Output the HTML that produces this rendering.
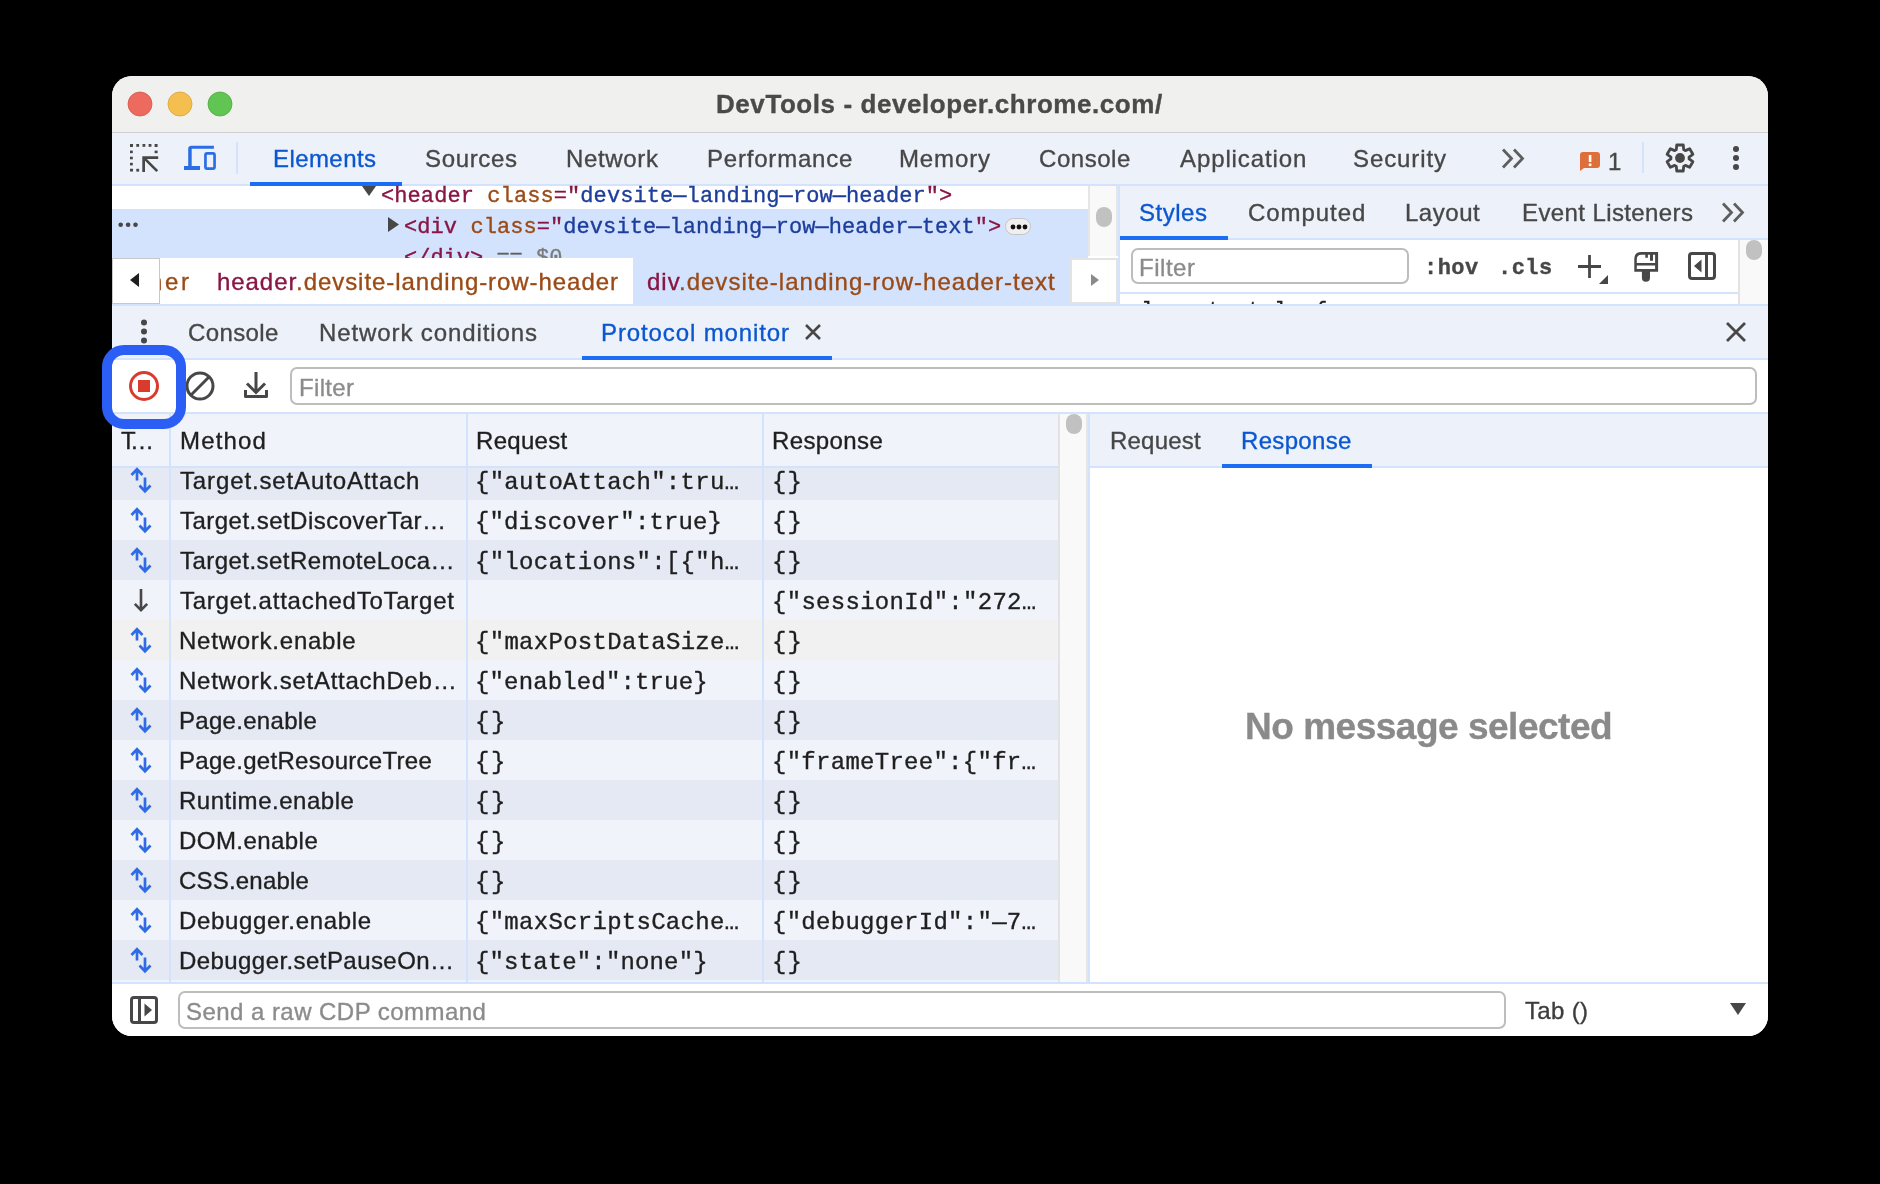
<!DOCTYPE html>
<html><head><meta charset="utf-8"><style>
html,body{margin:0;padding:0;background:#000;width:1880px;height:1184px;overflow:hidden}
#win div{}
.t{will-change:transform;-webkit-text-stroke:0.35px currentColor}
#win{position:absolute;left:0;top:0;width:1880px;height:1184px;clip-path:inset(76px 112px 148px 112px round 20px);background:#fff}
</style></head><body>
<div id="win">
<div style="position:absolute;left:112px;top:76px;width:1656px;height:56px;background:#f0f0ee;"></div>
<div style="position:absolute;left:112px;top:132px;width:1656px;height:1px;background:#cfcfcf;"></div>
<svg style="position:absolute;left:127px;top:91px" width="26" height="26" viewBox="0 0 26 26"><circle cx="13" cy="13" r="12" fill="#ed6a5e" stroke="#d5574b" stroke-width="0.8"/></svg>
<svg style="position:absolute;left:167px;top:91px" width="26" height="26" viewBox="0 0 26 26"><circle cx="13" cy="13" r="12" fill="#f5bf4f" stroke="#d9a23a" stroke-width="0.8"/></svg>
<svg style="position:absolute;left:207px;top:91px" width="26" height="26" viewBox="0 0 26 26"><circle cx="13" cy="13" r="12" fill="#61c554" stroke="#4fa83f" stroke-width="0.8"/></svg>
<div class="t" style="position:absolute;left:716.00px;top:89px;line-height:0;white-space:pre;font:700 26px 'Liberation Sans',sans-serif;letter-spacing:0.567px;color:#4a4a4a;">DevTools - developer.chrome.com/</div>
<div style="position:absolute;left:112px;top:133px;width:1656px;height:51px;background:#edf2fa;"></div>
<div style="position:absolute;left:112px;top:184px;width:1656px;height:2px;background:#d3e3fd;"></div>
<div style="position:absolute;left:250px;top:182px;width:152px;height:4px;background:#1b6ef3;"></div>
<svg style="position:absolute;left:128px;top:142px" width="32" height="32" viewBox="0 0 32 32"><g fill="#474747"><path d="M2 2 H5 V4.8 H4.8 V5 H2 Z"/><rect x="8.3" y="2" width="2.8" height="2.8"/><rect x="14.5" y="2" width="2.8" height="2.8"/><rect x="20.6" y="2" width="2.8" height="2.8"/><path d="M26.6 2 H29.6 V5 H26.6 Z"/><rect x="2" y="8.6" width="2.8" height="2.6"/><rect x="2" y="14.7" width="2.8" height="2.6"/><rect x="2" y="20.8" width="2.8" height="2.6"/><path d="M2 26.8 H5 V29.6 H2 Z"/><rect x="8.3" y="26.8" width="2.8" height="2.8"/><rect x="26.6" y="8.6" width="3" height="2.6"/></g><path d="M14.3 14.2 H30.2 V16.9 H18.9 L30.2 28.2 L28.3 30.1 L17 18.8 V29.9 H14.3 Z" fill="#474747"/></svg>
<svg style="position:absolute;left:182px;top:144px" width="36" height="30" viewBox="0 0 36 30"><path d="M6.2 22 V5 Q6.2 1.7 9.5 1.7 H31.9 V4.8 H9.7 V22 H18 V26 H2 V22 Z" fill="#2b6de6"/><rect x="23.45" y="9.45" width="9.1" height="15.2" rx="1.6" fill="none" stroke="#2b6de6" stroke-width="2.7"/></svg>
<div style="position:absolute;left:236px;top:142px;width:2px;height:32px;background:#d3e3fd;"></div>
<div class="t" style="position:absolute;left:273.00px;top:145px;line-height:0;white-space:pre;font:400 24px 'Liberation Sans',sans-serif;letter-spacing:0.422px;color:#0b57d0;">Elements</div>
<div class="t" style="position:absolute;left:425.00px;top:145px;line-height:0;white-space:pre;font:400 24px 'Liberation Sans',sans-serif;letter-spacing:0.660px;color:#474747;">Sources</div>
<div class="t" style="position:absolute;left:566.00px;top:145px;line-height:0;white-space:pre;font:400 24px 'Liberation Sans',sans-serif;letter-spacing:0.663px;color:#474747;">Network</div>
<div class="t" style="position:absolute;left:707.00px;top:145px;line-height:0;white-space:pre;font:400 24px 'Liberation Sans',sans-serif;letter-spacing:0.796px;color:#474747;">Performance</div>
<div class="t" style="position:absolute;left:899.00px;top:145px;line-height:0;white-space:pre;font:400 24px 'Liberation Sans',sans-serif;letter-spacing:0.866px;color:#474747;">Memory</div>
<div class="t" style="position:absolute;left:1039.00px;top:145px;line-height:0;white-space:pre;font:400 24px 'Liberation Sans',sans-serif;letter-spacing:0.549px;color:#474747;">Console</div>
<div class="t" style="position:absolute;left:1180.00px;top:145px;line-height:0;white-space:pre;font:400 24px 'Liberation Sans',sans-serif;letter-spacing:0.894px;color:#474747;">Application</div>
<div class="t" style="position:absolute;left:1353.00px;top:145px;line-height:0;white-space:pre;font:400 24px 'Liberation Sans',sans-serif;letter-spacing:0.901px;color:#474747;">Security</div>
<svg style="position:absolute;left:1499px;top:146px" width="32" height="24" viewBox="0 0 32 24"><path d="M4 3.5 L12.5 12.5 L4 21.5 M15 3.5 L23.5 12.5 L15 21.5" fill="none" stroke="#5e5e5e" stroke-width="2.8"/></svg>
<svg style="position:absolute;left:1577px;top:150px" width="26" height="22" viewBox="0 0 26 22"><path d="M4 2 H20 Q23 2 23 5 V15 Q23 18 20 18 H7 L3 21 V5 Q3 2 6 2 Z" fill="#dd6f3b"/><rect x="11.8" y="5" width="2.6" height="7" fill="#fff"/><rect x="11.8" y="13.5" width="2.6" height="2.6" fill="#fff"/></svg>
<div class="t" style="position:absolute;left:1608.00px;top:148px;line-height:0;white-space:pre;font:400 24px 'Liberation Sans',sans-serif;letter-spacing:0.600px;color:#474747;">1</div>
<div style="position:absolute;left:1642px;top:142px;width:2px;height:31px;background:#d3e3fd;"></div>
<svg style="position:absolute;left:1662px;top:140px" width="36" height="36" viewBox="0 0 36 36"><path d="M14.30 9.69 L14.76 5.00 L21.24 5.00 L21.70 9.69 A9.1 9.1 0 0 1 23.35 10.64 L23.35 10.64 L27.64 8.69 L30.88 14.31 L27.05 17.05 A9.1 9.1 0 0 1 27.05 18.95 L27.05 18.95 L30.88 21.69 L27.64 27.31 L23.35 25.36 A9.1 9.1 0 0 1 21.70 26.31 L21.70 26.31 L21.24 31.00 L14.76 31.00 L14.30 26.31 A9.1 9.1 0 0 1 12.65 25.36 L12.65 25.36 L8.36 27.31 L5.12 21.69 L8.95 18.95 A9.1 9.1 0 0 1 8.95 17.05 L8.95 17.05 L5.12 14.31 L8.36 8.69 L12.65 10.64 A9.1 9.1 0 0 1 14.30 9.69 Z" fill="none" stroke="#474747" stroke-width="2.8" stroke-linejoin="round"/><circle cx="18" cy="18" r="4.9" fill="#474747"/></svg>
<svg style="position:absolute;left:1728px;top:144px" width="16" height="28" viewBox="0 0 16 28"><circle cx="8" cy="5" r="3" fill="#474747"/><circle cx="8" cy="14" r="3" fill="#474747"/><circle cx="8" cy="23" r="3" fill="#474747"/></svg>
<div style="position:absolute;left:112px;top:186px;width:976px;height:23px;background:#ffffff;"></div>
<div style="position:absolute;left:112px;top:209px;width:976px;height:49px;background:#d3e3fd;"></div>
<svg style="position:absolute;left:360px;top:184px" width="20" height="14" viewBox="0 0 20 14"><path d="M2 2 H16 L9 12 Z" fill="#474747"/></svg>
<svg style="position:absolute;left:386px;top:215px" width="16" height="19" viewBox="0 0 16 19"><path d="M2 2 V17 L13 9.5 Z" fill="#474747"/></svg>
<svg style="position:absolute;left:116px;top:218px" width="26" height="14" viewBox="0 0 26 14"><circle cx="4.7" cy="6.7" r="2.3" fill="#474747"/><circle cx="12.1" cy="6.7" r="2.3" fill="#474747"/><circle cx="19.5" cy="6.7" r="2.3" fill="#474747"/></svg>
<div class="t" style="position:absolute;left:381.00px;top:184px;line-height:0;white-space:pre;font:400 22px 'Liberation Mono',monospace;letter-spacing:0.084px;color:#000;"><span style="color:#881544">&lt;header</span><span style="color:#881544"> </span><span style="color:#9b4a15">class</span><span style="color:#881544">=&quot;</span><span style="color:#1d3d9b">devsite—landing—row—header</span><span style="color:#881544">&quot;&gt;</span></div>
<div class="t" style="position:absolute;left:404.00px;top:215px;line-height:0;white-space:pre;font:400 22px 'Liberation Mono',monospace;letter-spacing:0.071px;color:#000;"><span style="color:#881544">&lt;div</span><span style="color:#881544"> </span><span style="color:#9b4a15">class</span><span style="color:#881544">=&quot;</span><span style="color:#1d3d9b">devsite—landing—row—header—text</span><span style="color:#881544">&quot;&gt;</span></div>
<div class="t" style="position:absolute;left:404.00px;top:246px;line-height:0;white-space:pre;font:400 22px 'Liberation Mono',monospace;letter-spacing:0.000px;color:#000;"><span style="color:#881544">&lt;/div&gt;</span><span style="color:#5f5f5f"> == </span><span style="color:#7a7a7a">$0</span></div>
<div style="position:absolute;left:1005px;top:218px;width:24px;height:15px;border:1.5px solid #c4c4c4;border-radius:9px;background:#efefef"></div>
<svg style="position:absolute;left:1008px;top:221px" width="22" height="12" viewBox="0 0 22 12"><circle cx="5" cy="6" r="2.4" fill="#111"/><circle cx="11" cy="6" r="2.4" fill="#111"/><circle cx="17" cy="6" r="2.4" fill="#111"/></svg>
<div style="position:absolute;left:1088px;top:186px;width:30px;height:70px;background:#f9f9f9;border-left:2px solid #e6e6e6;border-right:2px solid #e6e6e6;box-sizing:border-box"></div>
<div style="position:absolute;left:1096px;top:207px;width:16px;height:20px;background:#c1c1c1;border-radius:8px"></div>
<div style="position:absolute;left:112px;top:258px;width:1006px;height:46px;background:#ffffff;"></div>
<div style="position:absolute;left:633px;top:258px;width:438px;height:46px;background:#d3e3fd;"></div>
<div class="t" style="position:absolute;left:149.00px;top:268px;line-height:0;white-space:pre;font:400 24px 'Liberation Sans',sans-serif;letter-spacing:2.652px;color:#9b4a15;">ner</div>
<div class="t" style="position:absolute;left:217.00px;top:268px;line-height:0;white-space:pre;font:400 24px 'Liberation Sans',sans-serif;letter-spacing:0.940px;color:#881544;"><span style="color:#881544">header</span><span style="color:#9b4a15">.devsite-landing-row-header</span></div>
<div class="t" style="position:absolute;left:647.00px;top:268px;line-height:0;white-space:pre;font:400 24px 'Liberation Sans',sans-serif;letter-spacing:1.018px;color:#881544;"><span style="color:#881544">div</span><span style="color:#9b4a15">.devsite-landing-row-header-text</span></div>
<div style="position:absolute;left:112px;top:258px;width:48px;height:46px;box-sizing:border-box;border:1.5px solid #c7c7c7;background:#fff"></div>
<svg style="position:absolute;left:128px;top:272px" width="14" height="16" viewBox="0 0 14 16"><path d="M11 1 V15 L2 8 Z" fill="#1f1f1f"/></svg>
<div style="position:absolute;left:1070px;top:258px;width:48px;height:46px;box-sizing:border-box;border:2px solid #e3e3e3;background:#fff"></div>
<svg style="position:absolute;left:1088px;top:272px" width="14" height="16" viewBox="0 0 14 16"><path d="M3 2 V14 L11 8 Z" fill="#8a8a8a"/></svg>
<div style="position:absolute;left:1118px;top:186px;width:2px;height:118px;background:#d3e3fd;"></div>
<div style="position:absolute;left:1120px;top:186px;width:648px;height:52px;background:#edf2fa;"></div>
<div style="position:absolute;left:1120px;top:238px;width:648px;height:2px;background:#d3e3fd;"></div>
<div style="position:absolute;left:1120px;top:236px;width:108px;height:4px;background:#1b6ef3;"></div>
<div class="t" style="position:absolute;left:1139.00px;top:199px;line-height:0;white-space:pre;font:400 24px 'Liberation Sans',sans-serif;letter-spacing:0.529px;color:#0b57d0;">Styles</div>
<div class="t" style="position:absolute;left:1248.00px;top:199px;line-height:0;white-space:pre;font:400 24px 'Liberation Sans',sans-serif;letter-spacing:0.945px;color:#474747;">Computed</div>
<div class="t" style="position:absolute;left:1405.00px;top:199px;line-height:0;white-space:pre;font:400 24px 'Liberation Sans',sans-serif;letter-spacing:0.522px;color:#474747;">Layout</div>
<div class="t" style="position:absolute;left:1522.00px;top:199px;line-height:0;white-space:pre;font:400 24px 'Liberation Sans',sans-serif;letter-spacing:0.398px;color:#474747;">Event Listeners</div>
<svg style="position:absolute;left:1719px;top:200px" width="32" height="24" viewBox="0 0 32 24"><path d="M4 3.5 L12.5 12.5 L4 21.5 M15 3.5 L23.5 12.5 L15 21.5" fill="none" stroke="#5e5e5e" stroke-width="2.8"/></svg>
<div style="position:absolute;left:1120px;top:240px;width:618px;height:52px;background:#ffffff;"></div>
<div style="position:absolute;left:1120px;top:292px;width:618px;height:2px;background:#d3e3fd;"></div>
<div style="position:absolute;left:1120px;top:294px;width:618px;height:10px;background:#ffffff;"></div>
<div class="t" style="position:absolute;left:1128.00px;top:299px;line-height:0;white-space:pre;font:400 22px 'Liberation Mono',monospace;letter-spacing:0.100px;color:#1f1f1f;">element.style {</div>
<div style="position:absolute;left:1131px;top:248px;width:278px;height:36px;box-sizing:border-box;border:2px solid #bdbdbd;border-radius:7px;background:#fff"></div>
<div class="t" style="position:absolute;left:1139.00px;top:254px;line-height:0;white-space:pre;font:400 24px 'Liberation Sans',sans-serif;letter-spacing:0.532px;color:#8b8b8b;">Filter</div>
<div class="t" style="position:absolute;left:1424.00px;top:256px;line-height:0;white-space:pre;font:700 22px 'Liberation Mono',monospace;letter-spacing:0.465px;color:#474747;">:hov</div>
<div class="t" style="position:absolute;left:1498.00px;top:256px;line-height:0;white-space:pre;font:700 22px 'Liberation Mono',monospace;letter-spacing:0.465px;color:#474747;">.cls</div>
<svg style="position:absolute;left:1576px;top:252px" width="34" height="34" viewBox="0 0 34 34"><path d="M13.5 3 V26 M2 14.5 H25" stroke="#474747" stroke-width="2.8" fill="none"/><path d="M32 23 V32 H23 Z" fill="#474747"/></svg>
<svg style="position:absolute;left:1632px;top:250px" width="28" height="34" viewBox="0 0 28 34"><path fill="#474747" fill-rule="evenodd" d="M2.3 21.8 V9 Q2.3 2 9.3 2 H26.1 V21.8 Z M4.8 13 V9.3 Q4.8 4.8 9.3 4.8 H13.3 V7.8 H15.9 V4.8 H18 V10.7 H21 V4.8 H23.1 V13 Z M4.8 15.6 H23.1 V19 H4.8 Z"/><path fill="#474747" d="M9.9 21 H18 V27.8 A4.05 4.05 0 0 1 9.9 27.8 Z"/></svg>
<svg style="position:absolute;left:1686px;top:250px" width="32" height="32" viewBox="0 0 32 32"><rect x="3.5" y="3.5" width="25" height="25" rx="2.5" fill="none" stroke="#474747" stroke-width="3"/><rect x="19" y="3.5" width="3" height="25" fill="#474747"/><path d="M15.5 9.5 V22.5 L8 16 Z" fill="#474747"/></svg>
<div style="position:absolute;left:1738px;top:240px;width:30px;height:64px;background:#f9f9f9;border-left:2px solid #e3e3e3;box-sizing:border-box"></div>
<div style="position:absolute;left:1746px;top:240px;width:16px;height:20px;background:#c1c1c1;border-radius:8px"></div>
<div style="position:absolute;left:112px;top:304px;width:1656px;height:2px;background:#d3e3fd;"></div>
<div style="position:absolute;left:112px;top:306px;width:1656px;height:52px;background:#edf2fa;"></div>
<div style="position:absolute;left:112px;top:358px;width:1656px;height:2px;background:#d3e3fd;"></div>
<svg style="position:absolute;left:136px;top:316px" width="16" height="30" viewBox="0 0 16 30"><circle cx="8" cy="6.5" r="3" fill="#474747"/><circle cx="8" cy="15.5" r="3" fill="#474747"/><circle cx="8" cy="24.5" r="3" fill="#474747"/></svg>
<div class="t" style="position:absolute;left:188.00px;top:319px;line-height:0;white-space:pre;font:400 24px 'Liberation Sans',sans-serif;letter-spacing:0.382px;color:#474747;">Console</div>
<div class="t" style="position:absolute;left:319.00px;top:319px;line-height:0;white-space:pre;font:400 24px 'Liberation Sans',sans-serif;letter-spacing:0.897px;color:#474747;">Network conditions</div>
<div class="t" style="position:absolute;left:601.00px;top:319px;line-height:0;white-space:pre;font:400 24px 'Liberation Sans',sans-serif;letter-spacing:0.884px;color:#0b57d0;">Protocol monitor</div>
<svg style="position:absolute;left:803px;top:322px" width="20" height="20" viewBox="0 0 20 20"><path d="M3 3 L17 17 M17 3 L3 17" stroke="#474747" stroke-width="2.6"/></svg>
<div style="position:absolute;left:582px;top:356px;width:250px;height:4px;background:#1b6ef3;"></div>
<svg style="position:absolute;left:1724px;top:320px" width="24" height="24" viewBox="0 0 24 24"><path d="M3 3 L21 21 M21 3 L3 21" stroke="#474747" stroke-width="2.8"/></svg>
<div style="position:absolute;left:112px;top:360px;width:1656px;height:52px;background:#ffffff;"></div>
<div style="position:absolute;left:112px;top:412px;width:1656px;height:2px;background:#d3e3fd;"></div>
<svg style="position:absolute;left:126px;top:368px" width="36" height="36" viewBox="0 0 36 36"><circle cx="18" cy="18" r="13.5" fill="none" stroke="#d93b2f" stroke-width="3"/><rect x="12" y="12" width="12" height="12" fill="#d93b2f"/></svg>
<svg style="position:absolute;left:183px;top:368px" width="34" height="36" viewBox="0 0 34 36"><circle cx="17" cy="18" r="13" fill="none" stroke="#474747" stroke-width="3"/><path d="M26.2 8.8 L7.8 27.2" stroke="#474747" stroke-width="3"/></svg>
<svg style="position:absolute;left:240px;top:368px" width="32" height="34" viewBox="0 0 32 34"><path d="M16 4 V24 M7 15.5 L16 24.5 L25 15.5" fill="none" stroke="#474747" stroke-width="3"/><path d="M5.5 22 V28.5 H26.5 V22" fill="none" stroke="#474747" stroke-width="3" stroke-linejoin="round"/></svg>
<div style="position:absolute;left:290px;top:367px;width:1467px;height:38px;box-sizing:border-box;border:2px solid #bdbdbd;border-radius:7px;background:#fff"></div>
<div class="t" style="position:absolute;left:299.00px;top:374px;line-height:0;white-space:pre;font:400 24px 'Liberation Sans',sans-serif;letter-spacing:0.332px;color:#8b8b8b;">Filter</div>
<div style="position:absolute;left:112px;top:414px;width:946px;height:52px;background:#f0f3f9;"></div>
<div style="position:absolute;left:112px;top:466px;width:946px;height:2px;background:#d3e3fd;"></div>
<div style="position:absolute;left:112px;top:468px;width:946px;height:32px;background:#e4e9f4;"></div>
<div style="position:absolute;left:112px;top:500px;width:946px;height:40px;background:#f0f3f9;"></div>
<div style="position:absolute;left:112px;top:540px;width:946px;height:40px;background:#e4e9f4;"></div>
<div style="position:absolute;left:112px;top:580px;width:946px;height:40px;background:#f0f3f9;"></div>
<div style="position:absolute;left:112px;top:620px;width:946px;height:40px;background:#f1f1f1;"></div>
<div style="position:absolute;left:112px;top:660px;width:946px;height:40px;background:#f0f3f9;"></div>
<div style="position:absolute;left:112px;top:700px;width:946px;height:40px;background:#e4e9f4;"></div>
<div style="position:absolute;left:112px;top:740px;width:946px;height:40px;background:#f0f3f9;"></div>
<div style="position:absolute;left:112px;top:780px;width:946px;height:40px;background:#e4e9f4;"></div>
<div style="position:absolute;left:112px;top:820px;width:946px;height:40px;background:#f0f3f9;"></div>
<div style="position:absolute;left:112px;top:860px;width:946px;height:40px;background:#e4e9f4;"></div>
<div style="position:absolute;left:112px;top:900px;width:946px;height:40px;background:#f0f3f9;"></div>
<div style="position:absolute;left:112px;top:940px;width:946px;height:40px;background:#e4e9f4;"></div>
<svg style="position:absolute;left:128px;top:466px" width="26" height="28" viewBox="0 0 26 28"><path d="M9 14.5 V3.5 M3.5 9 L9 3.2 L14.5 9" fill="none" stroke="#2f6be6" stroke-width="2.7"/><path d="M17 11.5 V25 M11.5 19.5 L17 25.3 L22.5 19.5" fill="none" stroke="#2f6be6" stroke-width="2.7"/></svg>
<div class="t" style="position:absolute;left:180.00px;top:467px;line-height:0;white-space:pre;font:400 24px 'Liberation Sans',sans-serif;letter-spacing:0.871px;color:#1f1f1f;">Target.setAutoAttach</div>
<div class="t" style="position:absolute;left:475.00px;top:469px;line-height:0;white-space:pre;font:400 24px 'Liberation Mono',monospace;letter-spacing:0.280px;color:#1f1f1f;">{&quot;autoAttach&quot;:tru…</div>
<div class="t" style="position:absolute;left:771.50px;top:469px;line-height:0;white-space:pre;font:400 24px 'Liberation Mono',monospace;letter-spacing:1.098px;color:#1f1f1f;">{}</div>
<svg style="position:absolute;left:128px;top:506px" width="26" height="28" viewBox="0 0 26 28"><path d="M9 14.5 V3.5 M3.5 9 L9 3.2 L14.5 9" fill="none" stroke="#2f6be6" stroke-width="2.7"/><path d="M17 11.5 V25 M11.5 19.5 L17 25.3 L22.5 19.5" fill="none" stroke="#2f6be6" stroke-width="2.7"/></svg>
<div class="t" style="position:absolute;left:180.00px;top:507px;line-height:0;white-space:pre;font:400 24px 'Liberation Sans',sans-serif;letter-spacing:0.472px;color:#1f1f1f;">Target.setDiscoverTar…</div>
<div class="t" style="position:absolute;left:475.00px;top:509px;line-height:0;white-space:pre;font:400 24px 'Liberation Mono',monospace;letter-spacing:0.135px;color:#1f1f1f;">{&quot;discover&quot;:true}</div>
<div class="t" style="position:absolute;left:771.50px;top:509px;line-height:0;white-space:pre;font:400 24px 'Liberation Mono',monospace;letter-spacing:1.098px;color:#1f1f1f;">{}</div>
<svg style="position:absolute;left:128px;top:546px" width="26" height="28" viewBox="0 0 26 28"><path d="M9 14.5 V3.5 M3.5 9 L9 3.2 L14.5 9" fill="none" stroke="#2f6be6" stroke-width="2.7"/><path d="M17 11.5 V25 M11.5 19.5 L17 25.3 L22.5 19.5" fill="none" stroke="#2f6be6" stroke-width="2.7"/></svg>
<div class="t" style="position:absolute;left:180.00px;top:547px;line-height:0;white-space:pre;font:400 24px 'Liberation Sans',sans-serif;letter-spacing:0.457px;color:#1f1f1f;">Target.setRemoteLoca…</div>
<div class="t" style="position:absolute;left:475.00px;top:549px;line-height:0;white-space:pre;font:400 24px 'Liberation Mono',monospace;letter-spacing:0.280px;color:#1f1f1f;">{&quot;locations&quot;:[{&quot;h…</div>
<div class="t" style="position:absolute;left:771.50px;top:549px;line-height:0;white-space:pre;font:400 24px 'Liberation Mono',monospace;letter-spacing:1.098px;color:#1f1f1f;">{}</div>
<svg style="position:absolute;left:130px;top:586px" width="22" height="28" viewBox="0 0 22 28"><path d="M11 3 V24 M4.8 17.8 L11 24.2 L17.2 17.8" fill="none" stroke="#474747" stroke-width="2.6"/></svg>
<div class="t" style="position:absolute;left:180.00px;top:587px;line-height:0;white-space:pre;font:400 24px 'Liberation Sans',sans-serif;letter-spacing:0.749px;color:#1f1f1f;">Target.attachedToTarget</div>
<div class="t" style="position:absolute;left:771.50px;top:589px;line-height:0;white-space:pre;font:400 24px 'Liberation Mono',monospace;letter-spacing:0.292px;color:#1f1f1f;">{&quot;sessionId&quot;:&quot;272…</div>
<svg style="position:absolute;left:128px;top:626px" width="26" height="28" viewBox="0 0 26 28"><path d="M9 14.5 V3.5 M3.5 9 L9 3.2 L14.5 9" fill="none" stroke="#2f6be6" stroke-width="2.7"/><path d="M17 11.5 V25 M11.5 19.5 L17 25.3 L22.5 19.5" fill="none" stroke="#2f6be6" stroke-width="2.7"/></svg>
<div class="t" style="position:absolute;left:179.00px;top:627px;line-height:0;white-space:pre;font:400 24px 'Liberation Sans',sans-serif;letter-spacing:0.761px;color:#1f1f1f;">Network.enable</div>
<div class="t" style="position:absolute;left:475.00px;top:629px;line-height:0;white-space:pre;font:400 24px 'Liberation Mono',monospace;letter-spacing:0.286px;color:#1f1f1f;">{&quot;maxPostDataSize…</div>
<div class="t" style="position:absolute;left:771.50px;top:629px;line-height:0;white-space:pre;font:400 24px 'Liberation Mono',monospace;letter-spacing:1.098px;color:#1f1f1f;">{}</div>
<svg style="position:absolute;left:128px;top:666px" width="26" height="28" viewBox="0 0 26 28"><path d="M9 14.5 V3.5 M3.5 9 L9 3.2 L14.5 9" fill="none" stroke="#2f6be6" stroke-width="2.7"/><path d="M17 11.5 V25 M11.5 19.5 L17 25.3 L22.5 19.5" fill="none" stroke="#2f6be6" stroke-width="2.7"/></svg>
<div class="t" style="position:absolute;left:179.00px;top:667px;line-height:0;white-space:pre;font:400 24px 'Liberation Sans',sans-serif;letter-spacing:0.747px;color:#1f1f1f;">Network.setAttachDeb…</div>
<div class="t" style="position:absolute;left:475.00px;top:669px;line-height:0;white-space:pre;font:400 24px 'Liberation Mono',monospace;letter-spacing:0.144px;color:#1f1f1f;">{&quot;enabled&quot;:true}</div>
<div class="t" style="position:absolute;left:771.50px;top:669px;line-height:0;white-space:pre;font:400 24px 'Liberation Mono',monospace;letter-spacing:1.098px;color:#1f1f1f;">{}</div>
<svg style="position:absolute;left:128px;top:706px" width="26" height="28" viewBox="0 0 26 28"><path d="M9 14.5 V3.5 M3.5 9 L9 3.2 L14.5 9" fill="none" stroke="#2f6be6" stroke-width="2.7"/><path d="M17 11.5 V25 M11.5 19.5 L17 25.3 L22.5 19.5" fill="none" stroke="#2f6be6" stroke-width="2.7"/></svg>
<div class="t" style="position:absolute;left:179.00px;top:707px;line-height:0;white-space:pre;font:400 24px 'Liberation Sans',sans-serif;letter-spacing:0.296px;color:#1f1f1f;">Page.enable</div>
<div class="t" style="position:absolute;left:475.00px;top:709px;line-height:0;white-space:pre;font:400 24px 'Liberation Mono',monospace;letter-spacing:1.598px;color:#1f1f1f;">{}</div>
<div class="t" style="position:absolute;left:771.50px;top:709px;line-height:0;white-space:pre;font:400 24px 'Liberation Mono',monospace;letter-spacing:1.098px;color:#1f1f1f;">{}</div>
<svg style="position:absolute;left:128px;top:746px" width="26" height="28" viewBox="0 0 26 28"><path d="M9 14.5 V3.5 M3.5 9 L9 3.2 L14.5 9" fill="none" stroke="#2f6be6" stroke-width="2.7"/><path d="M17 11.5 V25 M11.5 19.5 L17 25.3 L22.5 19.5" fill="none" stroke="#2f6be6" stroke-width="2.7"/></svg>
<div class="t" style="position:absolute;left:179.00px;top:747px;line-height:0;white-space:pre;font:400 24px 'Liberation Sans',sans-serif;letter-spacing:0.294px;color:#1f1f1f;">Page.getResourceTree</div>
<div class="t" style="position:absolute;left:475.00px;top:749px;line-height:0;white-space:pre;font:400 24px 'Liberation Mono',monospace;letter-spacing:1.598px;color:#1f1f1f;">{}</div>
<div class="t" style="position:absolute;left:771.50px;top:749px;line-height:0;white-space:pre;font:400 24px 'Liberation Mono',monospace;letter-spacing:0.274px;color:#1f1f1f;">{&quot;frameTree&quot;:{&quot;fr…</div>
<svg style="position:absolute;left:128px;top:786px" width="26" height="28" viewBox="0 0 26 28"><path d="M9 14.5 V3.5 M3.5 9 L9 3.2 L14.5 9" fill="none" stroke="#2f6be6" stroke-width="2.7"/><path d="M17 11.5 V25 M11.5 19.5 L17 25.3 L22.5 19.5" fill="none" stroke="#2f6be6" stroke-width="2.7"/></svg>
<div class="t" style="position:absolute;left:179.00px;top:787px;line-height:0;white-space:pre;font:400 24px 'Liberation Sans',sans-serif;letter-spacing:0.519px;color:#1f1f1f;">Runtime.enable</div>
<div class="t" style="position:absolute;left:475.00px;top:789px;line-height:0;white-space:pre;font:400 24px 'Liberation Mono',monospace;letter-spacing:1.598px;color:#1f1f1f;">{}</div>
<div class="t" style="position:absolute;left:771.50px;top:789px;line-height:0;white-space:pre;font:400 24px 'Liberation Mono',monospace;letter-spacing:1.098px;color:#1f1f1f;">{}</div>
<svg style="position:absolute;left:128px;top:826px" width="26" height="28" viewBox="0 0 26 28"><path d="M9 14.5 V3.5 M3.5 9 L9 3.2 L14.5 9" fill="none" stroke="#2f6be6" stroke-width="2.7"/><path d="M17 11.5 V25 M11.5 19.5 L17 25.3 L22.5 19.5" fill="none" stroke="#2f6be6" stroke-width="2.7"/></svg>
<div class="t" style="position:absolute;left:179.00px;top:827px;line-height:0;white-space:pre;font:400 24px 'Liberation Sans',sans-serif;letter-spacing:0.446px;color:#1f1f1f;">DOM.enable</div>
<div class="t" style="position:absolute;left:475.00px;top:829px;line-height:0;white-space:pre;font:400 24px 'Liberation Mono',monospace;letter-spacing:1.598px;color:#1f1f1f;">{}</div>
<div class="t" style="position:absolute;left:771.50px;top:829px;line-height:0;white-space:pre;font:400 24px 'Liberation Mono',monospace;letter-spacing:1.098px;color:#1f1f1f;">{}</div>
<svg style="position:absolute;left:128px;top:866px" width="26" height="28" viewBox="0 0 26 28"><path d="M9 14.5 V3.5 M3.5 9 L9 3.2 L14.5 9" fill="none" stroke="#2f6be6" stroke-width="2.7"/><path d="M17 11.5 V25 M11.5 19.5 L17 25.3 L22.5 19.5" fill="none" stroke="#2f6be6" stroke-width="2.7"/></svg>
<div class="t" style="position:absolute;left:179.00px;top:867px;line-height:0;white-space:pre;font:400 24px 'Liberation Sans',sans-serif;letter-spacing:0.196px;color:#1f1f1f;">CSS.enable</div>
<div class="t" style="position:absolute;left:475.00px;top:869px;line-height:0;white-space:pre;font:400 24px 'Liberation Mono',monospace;letter-spacing:1.598px;color:#1f1f1f;">{}</div>
<div class="t" style="position:absolute;left:771.50px;top:869px;line-height:0;white-space:pre;font:400 24px 'Liberation Mono',monospace;letter-spacing:1.098px;color:#1f1f1f;">{}</div>
<svg style="position:absolute;left:128px;top:906px" width="26" height="28" viewBox="0 0 26 28"><path d="M9 14.5 V3.5 M3.5 9 L9 3.2 L14.5 9" fill="none" stroke="#2f6be6" stroke-width="2.7"/><path d="M17 11.5 V25 M11.5 19.5 L17 25.3 L22.5 19.5" fill="none" stroke="#2f6be6" stroke-width="2.7"/></svg>
<div class="t" style="position:absolute;left:179.00px;top:907px;line-height:0;white-space:pre;font:400 24px 'Liberation Sans',sans-serif;letter-spacing:0.659px;color:#1f1f1f;">Debugger.enable</div>
<div class="t" style="position:absolute;left:475.00px;top:909px;line-height:0;white-space:pre;font:400 24px 'Liberation Mono',monospace;letter-spacing:0.280px;color:#1f1f1f;">{&quot;maxScriptsCache…</div>
<div class="t" style="position:absolute;left:771.50px;top:909px;line-height:0;white-space:pre;font:400 24px 'Liberation Mono',monospace;letter-spacing:0.274px;color:#1f1f1f;">{&quot;debuggerId&quot;:&quot;—7…</div>
<svg style="position:absolute;left:128px;top:946px" width="26" height="28" viewBox="0 0 26 28"><path d="M9 14.5 V3.5 M3.5 9 L9 3.2 L14.5 9" fill="none" stroke="#2f6be6" stroke-width="2.7"/><path d="M17 11.5 V25 M11.5 19.5 L17 25.3 L22.5 19.5" fill="none" stroke="#2f6be6" stroke-width="2.7"/></svg>
<div class="t" style="position:absolute;left:179.00px;top:947px;line-height:0;white-space:pre;font:400 24px 'Liberation Sans',sans-serif;letter-spacing:0.430px;color:#1f1f1f;">Debugger.setPauseOn…</div>
<div class="t" style="position:absolute;left:475.00px;top:949px;line-height:0;white-space:pre;font:400 24px 'Liberation Mono',monospace;letter-spacing:0.144px;color:#1f1f1f;">{&quot;state&quot;:&quot;none&quot;}</div>
<div class="t" style="position:absolute;left:771.50px;top:949px;line-height:0;white-space:pre;font:400 24px 'Liberation Mono',monospace;letter-spacing:1.098px;color:#1f1f1f;">{}</div>
<div style="position:absolute;left:112px;top:980px;width:946px;height:2px;background:#f0f3f9;"></div>
<div style="position:absolute;left:112px;top:982px;width:946px;height:2px;background:#d3e3fd;"></div>
<div class="t" style="position:absolute;left:121.00px;top:427px;line-height:0;white-space:pre;font:400 24px 'Liberation Sans',sans-serif;letter-spacing:-5.660px;color:#1f1f1f;">T…</div>
<div class="t" style="position:absolute;left:179.50px;top:427px;line-height:0;white-space:pre;font:400 24px 'Liberation Sans',sans-serif;letter-spacing:1.159px;color:#1f1f1f;">Method</div>
<div class="t" style="position:absolute;left:475.50px;top:427px;line-height:0;white-space:pre;font:400 24px 'Liberation Sans',sans-serif;letter-spacing:0.296px;color:#1f1f1f;">Request</div>
<div class="t" style="position:absolute;left:771.50px;top:427px;line-height:0;white-space:pre;font:400 24px 'Liberation Sans',sans-serif;letter-spacing:0.397px;color:#1f1f1f;">Response</div>
<div style="position:absolute;left:169px;top:414px;width:2px;height:568px;background:#d3e3fd;"></div>
<div style="position:absolute;left:466px;top:414px;width:2px;height:568px;background:#d3e3fd;"></div>
<div style="position:absolute;left:762px;top:414px;width:2px;height:568px;background:#d3e3fd;"></div>
<div style="position:absolute;left:1058px;top:414px;width:30px;height:570px;background:#f9f9f9;border-left:2px solid #e3e3e3;border-right:2px solid #e6e6e6;box-sizing:border-box"></div>
<div style="position:absolute;left:1066px;top:414px;width:16px;height:20px;background:#c1c1c1;border-radius:8px"></div>
<div style="position:absolute;left:1088px;top:414px;width:2px;height:570px;background:#d3e3fd;"></div>
<div style="position:absolute;left:1090px;top:414px;width:678px;height:52px;background:#edf2fa;"></div>
<div style="position:absolute;left:1090px;top:466px;width:678px;height:2px;background:#d3e3fd;"></div>
<div style="position:absolute;left:1222px;top:464px;width:150px;height:4px;background:#1b6ef3;"></div>
<div class="t" style="position:absolute;left:1110.00px;top:427px;line-height:0;white-space:pre;font:400 24px 'Liberation Sans',sans-serif;letter-spacing:0.213px;color:#474747;">Request</div>
<div class="t" style="position:absolute;left:1241.00px;top:427px;line-height:0;white-space:pre;font:400 24px 'Liberation Sans',sans-serif;letter-spacing:0.325px;color:#0b57d0;">Response</div>
<div style="position:absolute;left:1090px;top:468px;width:678px;height:514px;background:#ffffff;"></div>
<div style="position:absolute;left:1090px;top:982px;width:678px;height:2px;background:#d3e3fd;"></div>
<div class="t" style="position:absolute;left:1245.00px;top:706px;line-height:0;white-space:pre;font:700 37px 'Liberation Sans',sans-serif;letter-spacing:-0.487px;color:#8a8a8a;">No message selected</div>
<div style="position:absolute;left:112px;top:984px;width:1656px;height:52px;background:#ffffff;"></div>
<div style="position:absolute;left:112px;top:982px;width:1656px;height:2px;background:#d3e3fd;"></div>
<svg style="position:absolute;left:128px;top:994px" width="32" height="32" viewBox="0 0 32 32"><rect x="3.5" y="3.5" width="25" height="25" rx="2.5" fill="none" stroke="#474747" stroke-width="3"/><rect x="10" y="3.5" width="3" height="25" fill="#474747"/><path d="M16.5 9.5 V22.5 L24 16 Z" fill="#474747"/></svg>
<div style="position:absolute;left:178px;top:991px;width:1328px;height:38px;box-sizing:border-box;border:2px solid #bdbdbd;border-radius:7px;background:#fff"></div>
<div class="t" style="position:absolute;left:186.00px;top:998px;line-height:0;white-space:pre;font:400 24px 'Liberation Sans',sans-serif;letter-spacing:0.455px;color:#8b8b8b;">Send a raw CDP command</div>
<div class="t" style="position:absolute;left:1525.00px;top:997px;line-height:0;white-space:pre;font:400 24px 'Liberation Sans',sans-serif;letter-spacing:0.329px;color:#3c3c3c;">Tab ()</div>
<svg style="position:absolute;left:1728px;top:1001px" width="20" height="16" viewBox="0 0 20 16"><path d="M2 2 H18 L10 14 Z" fill="#474747"/></svg>
</div>
<div style="position:absolute;left:102px;top:345px;width:84px;height:84px;box-sizing:border-box;border:10px solid #2b5ef5;border-radius:22px"></div>
</body></html>
